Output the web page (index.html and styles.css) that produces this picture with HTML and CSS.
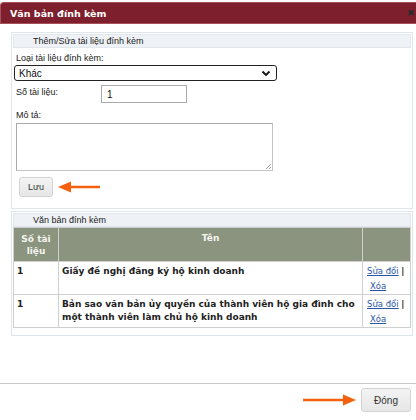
FILE: index.html
```html
<!DOCTYPE html>
<html lang="vi">
<head>
<meta charset="utf-8">
<title>Văn bản đính kèm</title>
<link rel="stylesheet" href="styles.css">
</head>
<body>
<div class="dialog">
  <div class="titlebar">
    <span class="title">Văn bản đính kèm</span>
    <span class="close">✖</span>
  </div>
  <div class="dialog-body">
    <div class="panel form-panel">
      <div class="legend">Thêm/Sửa tài liệu đính kèm</div>
      <div class="field-label">Loại tài liệu đính kèm:</div>
      <div class="select">
        <span>Khác</span>
        <svg class="chev" width="10" height="7" viewBox="0 0 10 7"><path d="M1.5 1.5 L5 5 L8.5 1.5" fill="none" stroke="#111" stroke-width="1.8"/></svg>
      </div>
      <div class="row">
        <span class="row-label">Số tài liệu:</span>
        <div class="input">1</div>
      </div>
      <div class="field-label desc-label">Mô tả:</div>
      <div class="textarea">
        <svg class="grip" width="7" height="7" viewBox="0 0 7 7"><path d="M6 1 L1 6 M6 4 L4 6" stroke="#999" stroke-width="1"/></svg>
      </div>
      <div class="btn-row">
        <button class="btn save-btn">Lưu</button>
        <svg class="arrow arrow-left" width="44" height="12" viewBox="0 0 44 12"><path d="M12 6 H42" stroke="#f5600f" stroke-width="2.5"/><path d="M0 6 L13 0.5 L13 11.5 Z" fill="#f5600f"/></svg>
      </div>
    </div>

    <div class="panel list-panel">
      <div class="legend">Văn bản đính kèm</div>
      <table class="grid">
        <thead>
          <tr>
            <th class="c1">Số tài<br>liệu</th>
            <th class="c2">Tên</th>
            <th class="c3"></th>
          </tr>
        </thead>
        <tbody>
          <tr>
            <td class="num">1</td>
            <td class="name">Giấy đề nghị đăng ký hộ kinh doanh</td>
            <td class="acts"><div><a href="#">Sửa đổi</a> <b>|</b></div><div class="del"><a href="#">Xóa</a></div></td>
          </tr>
          <tr>
            <td class="num">1</td>
            <td class="name">Bản sao văn bản ủy quyền của thành viên hộ gia đình cho một thành viên làm chủ hộ kinh doanh</td>
            <td class="acts"><div><a href="#">Sửa đổi</a> <b>|</b></div><div class="del"><a href="#">Xóa</a></div></td>
          </tr>
        </tbody>
      </table>
    </div>
  </div>
  <div class="footer">
    <svg class="arrow arrow-right" width="54" height="12" viewBox="0 0 54 12"><path d="M0 6 H42" stroke="#f5600f" stroke-width="2.5"/><path d="M53 6 L40 0.5 L40 11.5 Z" fill="#f5600f"/></svg>
    <button class="btn close-btn">Đóng</button>
  </div>
</div>
</body>
</html>
```

FILE: styles.css
```css
* { box-sizing: border-box; }
html, body { margin: 0; padding: 0; background: #ffffff; }
body {
  font-family: "Liberation Sans", Arial, sans-serif;
  font-size: 9px;
  color: #222;
  width: 416px;
  height: 420px;
  overflow: hidden;
}
.dialog {
  width: 416px;
  height: 420px;
  padding-top: 2px;
  position: relative;
}
.titlebar {
  height: 22px;
  background: #7e1f2d;
  border: 1px solid #a8505a;
  border-right: none;
  border-radius: 4px 0 0 0;
  display: flex;
  align-items: center;
  justify-content: space-between;
  padding-left: 9px;
}
.title {
  font-family: "DejaVu Sans", Verdana, sans-serif;
  font-weight: bold;
  font-size: 9.5px;
  color: #ffffff;
}
.close {
  font-size: 9px;
  color: #2a2a2a;
  margin-right: 1px;
}
.dialog-body {
  padding: 8px 4px 0 11px;
  height: 359px;
}
.panel {
  width: 402px;
  border: 1px solid #dde6ea;
  padding: 1px 1px 0 1px;
}
.legend {
  height: 14px;
  background: #eef1f5;
  border: 1px solid #e2e7ec;
  padding-left: 19px;
  line-height: 12px;
  font-size: 9px;
  color: #222;
}
.form-panel { height: 177px; }
.field-label {
  margin: 5px 0 0 3px;
  line-height: 11px;
  height: 11px;
}
.desc-label { margin-top: 7px; }
.select {
  margin: 1px 0 0 1px;
  width: 263px;
  height: 16px;
  border: 1.5px solid #222;
  border-radius: 3px;
  display: flex;
  align-items: center;
  justify-content: space-between;
  padding: 0 5px 0 4px;
  font-size: 10px;
  color: #111;
}
.chev { display: block; }
.row {
  display: flex;
  margin-top: 4px;
  height: 18px;
}
.row-label {
  width: 85px;
  margin-left: 3px;
  line-height: 11px;
  padding-top: 2px;
}
.input {
  width: 86px;
  height: 18px;
  border: 1px solid #aaa;
  padding-left: 5px;
  line-height: 17px;
  font-size: 10px;
  color: #111;
}
.textarea {
  margin: 2px 0 0 3px;
  width: 257px;
  height: 48px;
  border: 1px solid #aaa;
  border-bottom-color: #c4c4c4;
  border-right-color: #c4c4c4;
  position: relative;
}
.grip { position: absolute; right: 0; bottom: 0; }
.btn-row {
  display: flex;
  align-items: center;
  margin: 6px 0 0 6px;
}
.btn {
  font-family: "Liberation Sans", Arial, sans-serif;
  font-size: 9px;
  color: #333;
  background: linear-gradient(#f4f4f4, #e6e6e6);
  border: 1px solid #d3d3d3;
  border-radius: 3px;
  padding: 0;
}
.save-btn { width: 34px; height: 20px; }
.arrow { display: block; }
.arrow-left { margin-left: 5px; }

.list-panel {
  margin-top: 2px;
  height: 125px;
}
.grid {
  border-collapse: collapse;
  width: 398px;
  margin-top: 0;
  font-family: "DejaVu Sans", Verdana, sans-serif;
  font-size: 9px;
}
.grid th, .grid td {
  border: 1px solid #cfcfcf;
}
.grid th {
  background: #8b947f;
  color: #f4f4f0;
  font-weight: bold;
  height: 34px;
  line-height: 12px;
  padding: 0;
}
.grid .c1 { width: 45px; }
.grid .c2 { width: 304px; text-align: center; vertical-align: top; padding-top: 4px; }
.grid .c3 { width: 48px; }
.grid td {
  height: 33px;
  vertical-align: top;
  padding: 3px 3px 0 3px;
  line-height: 13px;
}
.grid .num, .grid .name { font-weight: bold; color: #222; }
.grid .acts { padding-left: 4px; font-size: 8.5px; }
.grid .acts a { color: #2b56a8; text-decoration: underline; }
.grid .acts b { color: #222; }
.grid .del { margin-top: 2px; padding-left: 3px; }

.footer {
  border-top: 1px solid #c9c9c9;
  display: flex;
  justify-content: flex-end;
  align-items: center;
  padding: 4px 5px 0 0;
  gap: 4px;
}
.close-btn { width: 50px; height: 24px; font-size: 10px; }
```
